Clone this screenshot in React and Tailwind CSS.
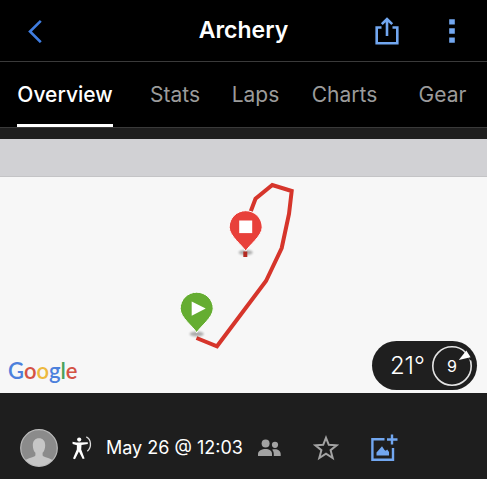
import React, { useState } from 'react';

const TABS = ['Overview', 'Stats', 'Laps', 'Charts', 'Gear'];

const Header = () => (
  <header className="flex h-[62px] items-center border-b border-[#3a3a3a] px-4">
    <div className="flex flex-1 justify-start pl-2">
      <button type="button" aria-label="Back" className="p-1 text-[#3f7de0]">
        <svg width="14" height="24" viewBox="0 0 14 24" fill="none" stroke="currentColor" strokeWidth="2.6">
          <path d="M12.8 1.8L2 12.5L12.8 23.2" />
        </svg>
      </button>
    </div>
    <h1 className="text-[23px] font-semibold text-white">Archery</h1>
    <div className="flex flex-1 items-center justify-end gap-[42px] pr-2 text-[#72a7f0]">
      <button type="button" aria-label="Share">
        <svg width="24" height="28" viewBox="0 0 24 28" fill="none" stroke="currentColor" strokeWidth="2.6">
          <path d="M6.5 10.5H1.7V26.3H22.3V10.5H17.5" />
          <path d="M12 19V2.5M6.8 7.2L12 2L17.2 7.2" />
        </svg>
      </button>
      <button type="button" aria-label="More options" className="px-2">
        <svg width="6" height="24" viewBox="0 0 6 24" fill="currentColor">
          <path d="M0.2 0.2H5.8V5.6H0.2ZM0.2 9.3H5.8V14.7H0.2ZM0.2 18.4H5.8V23.8H0.2Z" />
        </svg>
      </button>
    </div>
  </header>
);

const TabBar = ({ active, onChange }) => (
  <nav className="grid h-[66px] grid-cols-[130fr_90fr_71fr_107fr_89fr] border-b border-[#3a3a3a]">
    {TABS.map((tab) => (
      <button
        key={tab}
        type="button"
        onClick={() => onChange(tab)}
        className={
          tab === active
            ? 'justify-self-center border-b-3 border-white pt-1 text-[21px] font-medium text-white'
            : 'justify-self-center border-b-3 border-transparent pt-1 text-[21px] text-[#9b9b9b]'
        }
      >
        {tab}
      </button>
    ))}
  </nav>
);

// Teardrop marker, origin at the tip
const Pin = ({ x, y, fill, children }) => (
  <g transform={`translate(${x} ${y})`}>
    <ellipse cx="0" cy="2" rx="7" ry="2.5" fill="#000" opacity="0.3" filter="url(#soft)" />
    <path
      d="M0 0.8C-3 -5 -16.5 -14.5 -16.5 -23.3A16.5 16.5 0 0 1 16.5 -23.3C16.5 -14.5 3 -5 0 0.8Z"
      fill={fill}
      stroke="#fff"
      strokeWidth="1"
    />
    {children}
  </g>
);

const RouteMap = () => (
  <svg className="block h-[216px] w-full" viewBox="0 0 487 216" role="img" aria-label="Route">
    <defs>
      <filter id="soft" x="-50%" y="-100%" width="200%" height="300%">
        <feGaussianBlur stdDeviation="1.2" />
      </filter>
    </defs>
    <path
      d="M250.5 35L255.5 21.7L272.3 8L291.7 14L289 37L281.7 71L266 104L217 169.3L196.5 161"
      fill="none"
      stroke="#d6352b"
      strokeWidth="4"
    />
    <Pin x={245.7} y={73.5} fill="#e8403a">
      <rect x="-6.5" y="-30" width="13" height="12.6" fill="#fff" />
    </Pin>
    <path d="M245.3 74.500V80" stroke="#b32a22" strokeWidth="4" />
    <Pin x={196.7} y={155} fill="#65ad31">
      <path d="M-5 -30.5L9 -23.4L-5 -16.3Z" fill="#fff" />
    </Pin>
  </svg>
);

const GoogleMark = () => (
  <span className="font-[Lato,sans-serif] text-[22px] leading-7 font-semibold text-[#4c80dc]">
    G<span className="text-[#d45345]">o</span>
    <span className="text-[#edb93e]">o</span>g<span className="text-[#4aa35c]">l</span>
    <span className="text-[#d45345]">e</span>
  </span>
);

const WeatherBadge = () => (
  <div className="flex h-[49px] items-center gap-[6px] rounded-full bg-[#1f1f1f] pr-1 pl-[18px] text-white">
    <span className="text-2xl font-light">21°</span>
    <div className="relative flex size-[42px] items-center justify-center">
      <svg className="absolute inset-0" width="42" height="42" viewBox="0 0 42 42">
        <circle cx="21" cy="21" r="19.2" fill="none" stroke="#e4e4e4" strokeWidth="1.6" />
        <path d="M33.3 4.500L35.500 6.800L41 14.500L39 15.500Z" fill="#1f1f1f" />
        <path d="M35.300 5.500L27.800 15L39.500 12.200Z" fill="#fff" />
      </svg>
      <span className="text-base">9</span>
    </div>
  </div>
);

const Avatar = () => (
  <svg width="38" height="38" viewBox="0 0 38 38" role="img" aria-label="Profile">
    <defs>
      <clipPath id="face">
        <circle cx="19" cy="19" r="18" />
      </clipPath>
    </defs>
    <circle cx="19" cy="19" r="18.3" fill="#8b8b8b" stroke="#b9b9b9" strokeWidth="1.2" />
    <path
      clipPath="url(#face)"
      d="M19 9.3C22.8 9.3 25.2 12 25.2 16.2C25.2 20 23.9 22.6 22.6 23.8V26.5C24 28.6 30 28.6 33.5 32V40H4.5V32C8 28.6 14 28.6 15.4 26.5V23.8C14.1 22.6 12.8 20 12.8 16.2C12.8 12 15.2 9.3 19 9.3Z"
      fill="#c6c6c6"
    />
  </svg>
);

const Archer = () => (
  <svg width="20" height="24" viewBox="0 0 20 24" role="img" aria-label="Archery">
    <circle cx="7.2" cy="3.6" r="2.1" fill="#fff" />
    <path
      d="M0.5 5.8L4.3 6.4L15.8 6.3V8L9.5 8.9L9.2 13.5L12.6 22.4L10.7 23L6.9 15.5L3 23.2L1 22.4L4.8 13.4L4.9 9.3L0.6 7.9Z"
      fill="#fff"
    />
    <path d="M14.3 0.8C19.3 3.2 20 11.5 15.3 15.2" fill="none" stroke="#dcdcdc" strokeWidth="1.3" />
  </svg>
);

const ActivityBar = () => (
  <footer className="flex items-center pt-9 pb-3 pl-5">
    <Avatar />
    <div className="ml-[14px] flex items-center gap-[14px]">
      <Archer />
      <span className="text-lg whitespace-nowrap text-white">May 26 @ 12:03</span>
    </div>
    <button type="button" aria-label="Visibility" className="ml-[15px] text-[#a3a3a3]">
      <svg width="23" height="18" viewBox="0 0 23 18" fill="currentColor">
        <circle cx="7.6" cy="4.4" r="4" />
        <circle cx="17" cy="5.8" r="3.1" />
        <path d="M0 17V15C0 11.5 4 10 7.5 10C11.2 10 14 11.8 14 15V17Z" />
        <path d="M14 10.7C15 10.3 16 10.2 17 10.2C20 10.2 22.7 12 22.7 15V17H15.8V15C15.8 13.2 15.2 11.7 14 10.7Z" />
      </svg>
    </button>
    <button type="button" aria-label="Favorite" className="ml-8 text-[#a3a3a3]">
      <svg width="26" height="26" viewBox="0 0 26 26" fill="none" stroke="currentColor" strokeWidth="2">
        <path d="M13 2.8L15.8 9.8L23.6 10.3L17.6 15.2L19.7 23L13 18.7L6.3 23L8.4 15.2L2.4 10.3L10.2 9.8Z" />
      </svg>
    </button>
    <button type="button" aria-label="Add photo" className="ml-8 text-[#72a7f0]">
      <svg width="27" height="28" viewBox="0 0 27 28" fill="none" stroke="currentColor" strokeWidth="2.4">
        <path d="M13.5 5.3H1.4V25.7H22V14" />
        <path d="M21 0.5V10.5M16 5.5H26.5" />
        <path
          d="M5.5 21.5V18.5L8.2 15.6L11 12.3L13.5 16L14.8 16.8L16.2 15.5L18 18V21.5Z"
          fill="currentColor"
          stroke="none"
        />
      </svg>
    </button>
  </footer>
);

export default function App() {
  const [tab, setTab] = useState('Overview');

  return (
    <div className="min-h-screen bg-[#1e1e1e] font-[Inter,sans-serif]">
      <div className="bg-black">
        <Header />
        <TabBar active={tab} onChange={setTab} />
      </div>
      <main>
        <div className="mt-[11px] h-[38px] border-b border-[#c4c4c6] bg-[#d1d1d4]" />
        <section className="relative bg-[#f7f7f7]">
          <RouteMap />
          <div className="absolute bottom-2 left-2">
            <GoogleMark />
          </div>
          <div className="absolute right-[10px] bottom-[3px]">
            <WeatherBadge />
          </div>
        </section>
        <ActivityBar />
      </main>
    </div>
  );
}
